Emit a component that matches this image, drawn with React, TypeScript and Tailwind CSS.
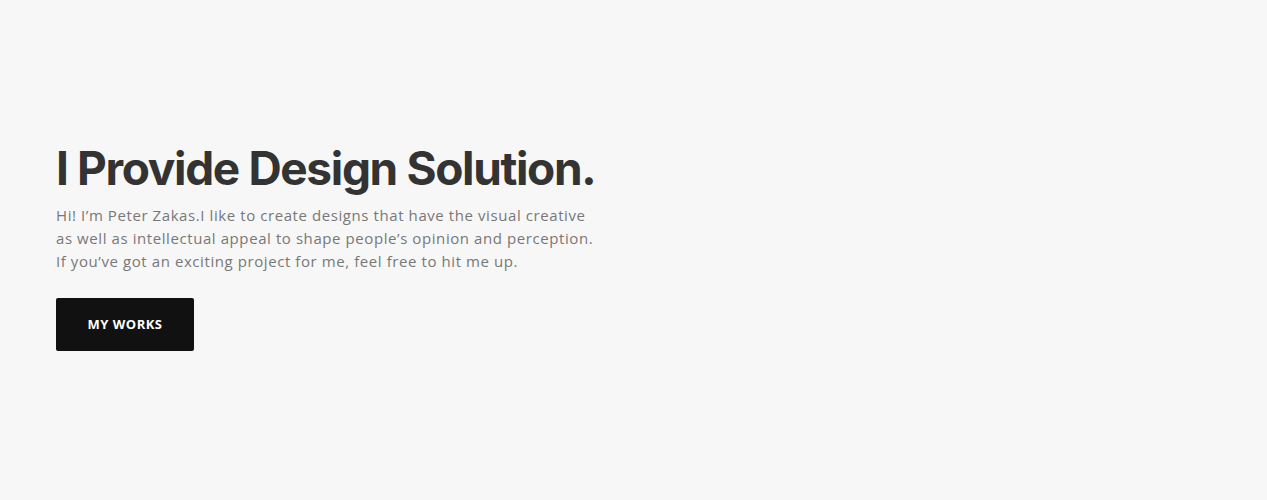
export default function App() {
  return (
    <main className="min-h-[500px] w-full bg-[#f7f7f7] pt-[142px]">
      <section className="pl-[56px]">
        <h1 className="font-['Inter',sans-serif] font-bold text-[46px] leading-[52px] tracking-[-1.35px] text-[#333]">
          I Provide Design Solution.
        </h1>
        <p className="mt-[10px] w-[580px] font-['Open_Sans',sans-serif] text-[15px] leading-[23px] tracking-[0.58px] text-[#777]">
          Hi! I’m Peter Zakas.I like to create designs that have the visual creative
          <br />
          as well as intellectual appeal to shape people’s opinion and perception.
          <br />
          If you’ve got an exciting project for me, feel free to hit me up.
        </p>
        <button className="mt-[25px] w-[138px] h-[53px] rounded-[2px] bg-[#111] font-['Open_Sans',sans-serif] font-bold text-[13px] tracking-[0.5px] text-white">
          MY WORKS
        </button>
      </section>
    </main>
  );
}
